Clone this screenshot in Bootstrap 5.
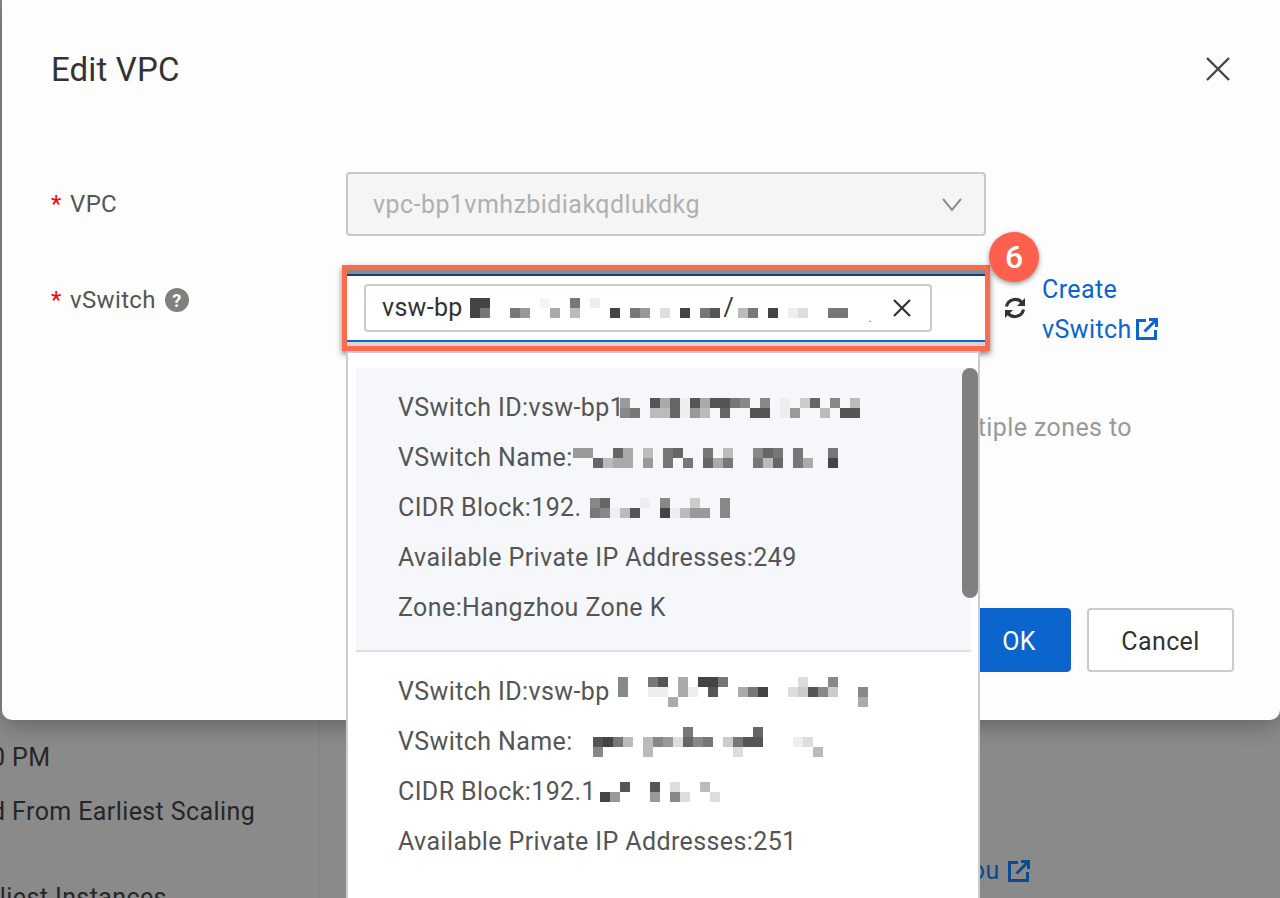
<!DOCTYPE html>
<html lang="en">
<head>
<meta charset="utf-8">
<title>Edit VPC</title>
<link href="https://cdn.jsdelivr.net/npm/bootstrap@5.3.0/dist/css/bootstrap.min.css" rel="stylesheet">
<style>
html,body{height:898px;overflow:hidden}
body{background:#8a8a8a;font-family:Roboto,"Liberation Sans",sans-serif;font-size:25px;color:#333;letter-spacing:.4px}
.stage{position:relative;height:898px;overflow:hidden}
.dlg.modal-content{margin-left:2px;width:1278px;height:720px;background:#fdfdfd;border:0;border-radius:0 0 10px 10px;box-shadow:0 4px 24px rgba(0,0,0,.3);position:relative;z-index:2;display:block;padding:0}
.dlg-head{padding:49px 49px 0;height:172px;display:flex;justify-content:space-between;align-items:flex-start}
.dlg-title{font-size:33px;line-height:42px;margin:0;font-weight:400;color:#333;letter-spacing:.15px}
.dlg-x{margin:7px 0 0 0;display:block;line-height:0}
.frow{display:flex;padding-left:49px}
.flabel{width:295px;flex:none;color:#555;display:flex;align-items:center;height:64px;white-space:nowrap;font-size:24px;letter-spacing:.35px}
.req{color:#f00;margin-right:9px;width:10px}
.qmark{display:inline-flex;width:24px;height:24px;border-radius:50%;background:#808080;color:#fff;font-size:18px;font-weight:700;align-items:center;justify-content:center;margin-left:9px;letter-spacing:0}
.vpc-box{width:640px;height:64px;background:#f5f5f5;border:2px solid #c8c8c8;border-radius:4px;color:#b0b0b0;display:flex;align-items:center;justify-content:space-between;padding:1px 22px 0 25px;letter-spacing:.44px}
.row2{margin-top:29px;position:relative}
.row2 .flabel{height:70px;align-items:center}
.hl{width:648px;height:86px;border:5px solid #ff6a4d;margin-left:-4px;flex:none;background:linear-gradient(#8a8a8a 0 50%,#d6d6d6 50%);box-shadow:0 3px 6px rgba(0,0,0,.5);position:relative;z-index:4}
.hl-in{margin-top:4px;height:68px;background:#fff;border-top:2px solid #0e3f7f;border-bottom:2px solid #0b65cc;padding:8px 53px 0 17px}
.sel{height:48px;border:2px solid #ccc;border-radius:4px;background:#fff;display:flex;align-items:center;padding:0 19px 0 16px;white-space:nowrap;color:#333;letter-spacing:.3px}
.sel svg.m{margin:0 4px 0 4px;flex:none}
.sel svg.m.first{margin-left:7px}
.speck{color:#777;margin-left:6px;font-size:14px;align-self:flex-end;line-height:26px}
.refresh{margin:31px 0 0 13px;flex:none;line-height:0}
.newlink{margin:5px 0 0 15px;line-height:40px;color:#0b65cc;width:140px}
.newlink svg{vertical-align:-2px;margin-left:-2px}
.bubble{position:absolute;left:987px;top:-33px;width:50px;height:50px;border-radius:50%;background:#ff5f4d;color:#fff;font-size:32px;font-weight:500;display:flex;align-items:center;justify-content:center;box-shadow:0 2px 5px rgba(0,0,0,.4);z-index:5;letter-spacing:0}
.hint{margin:60px 0 0 344px;width:786px;text-align:right;color:#999;white-space:nowrap;line-height:34px}
.foot{display:flex;justify-content:flex-end;gap:16px;padding-right:46px;margin-top:163px}
.foot .btn{height:64px;font-size:25px;border-radius:4px;letter-spacing:.4px;padding-top:10px}
.btn-ok.btn{width:140px;background:#0b65cc;border-color:#0b65cc;color:#fff;padding-left:48px}
.btn-no.btn{width:147px;background:#fff;border:2px solid #ccc;color:#333}
.drop{position:absolute;left:346px;top:351px;width:634px;height:552px;background:#fff;border:2px solid #ccc;z-index:3;padding:15px 7px 0 8px;overflow:hidden}
.drop .list-group-item{background:transparent;border:0;border-radius:0;padding:15px 42px 0;height:284px;color:#555;letter-spacing:.4px}
.drop .list-group-item.on{background:#f6f7fa;border-bottom:2px solid #e0e0e0}
.oline{height:50px;line-height:50px;white-space:nowrap;display:flex;align-items:center}
.oline svg{flex:none}
.oline svg.pull{margin-left:-4px}
.drop .list-group-item+.list-group-item{padding-top:15px;border-top:0}
.sbar{position:absolute;right:0;top:15px;width:16px;height:230px;border-radius:8px;background:#808080}
.m rect{width:10px;height:10px}
.under{display:flex;height:178px;color:#262626;position:relative;z-index:1}
.under-l{width:320px;border-right:1px solid #838383;padding-top:21px;line-height:34px;flex:none;overflow:hidden;white-space:nowrap;text-indent:-9px}
.under-l p{margin:0 0 20px}
.under-l p.gap{margin-bottom:52px}
.under-r{flex:1;padding:132px 0 0 0;position:relative}
.under-link{position:relative;margin-left:563px;color:#0d4a8f;line-height:34px;white-space:nowrap;display:inline-flex;align-items:center;gap:8px}
</style>
</head>
<body>
<div class="stage">
  <div class="dlg modal-content">
    <div class="dlg-head">
      <h5 class="dlg-title">Edit VPC</h5>
      <span class="dlg-x"><svg width="26" height="26" viewBox="0 0 26 26"><path d="M2 2l22 22M24 2L2 24" stroke="#444" stroke-width="2.4" fill="none"/></svg></span>
    </div>
    <div class="frow">
      <div class="flabel"><span class="req">*</span>VPC</div>
      <div class="vpc-box"><span>vpc-bp1vmhzbidiakqdlukdkg</span><svg width="20" height="14" viewBox="0 0 20 14"><path d="M1 1l9 11 9-11" stroke="#8f8f8f" stroke-width="2" fill="none"/></svg></div>
    </div>
    <div class="frow row2">
      <div class="flabel"><span class="req">*</span>vSwitch<span class="qmark">?</span></div>
      <div class="hl"><div class="hl-in"><div class="sel"><span>vsw-bp</span><svg class="m first" width="250" height="20" viewBox="0 0 250 20"><rect x="0" fill="#444"/><rect x="10" fill="#444"/><rect x="70" fill="#f5f5f5"/><rect x="100" fill="#777"/><rect x="120" fill="#eee"/><rect x="0" y="10" fill="#444"/><rect x="10" y="10" fill="#777"/><rect x="40" y="10" fill="#777"/><rect x="50" y="10" fill="#999"/><rect x="80" y="10" fill="#aaa"/><rect x="100" y="10" fill="#bbb"/><rect x="140" y="10" fill="#444"/><rect x="160" y="10" fill="#777"/><rect x="170" y="10" fill="#999"/><rect x="190" y="10" fill="#ddd"/><rect x="210" y="10" fill="#444"/><rect x="230" y="10" fill="#777"/><rect x="240" y="10" fill="#555"/></svg><span>/</span><svg class="m" width="120" height="20" viewBox="0 0 120 20"><rect x="0" y="10" fill="#bbb"/><rect x="10" y="10" fill="#777"/><rect x="30" y="10" fill="#444"/><rect x="50" y="10" fill="#eee"/><rect x="60" y="10" fill="#ddd"/><rect x="90" y="10" fill="#777"/><rect x="100" y="10" fill="#777"/></svg><span class="speck">.</span><span class="ms-auto"></span><svg width="18" height="18" viewBox="0 0 18 18"><path d="M1 1l16 16M17 1L1 17" stroke="#333" stroke-width="2.2" fill="none"/></svg></div></div></div>
      <span class="refresh"><svg width="24" height="24" viewBox="0 0 24 24" fill="none" stroke="#333" stroke-width="3.2"><path d="M3.500 10.500A8.800 8.800 0 0 1 19 6.800"/><path d="M20.500 13.500A8.800 8.800 0 0 1 5 17.200"/><path d="M22 2v8h-8z" fill="#333" stroke="none"/><path d="M2 22v-8h8z" fill="#333" stroke="none"/></svg></span>
      <div class="newlink">Create<br>vSwitch <svg width="22" height="22" viewBox="0 0 22 22" fill="none" stroke="#0b65cc" stroke-width="3"><path d="M10 2.500H1.500v18h18V12"/><path d="M8.500 13.500L19 3"/><path d="M13 1.500h7.500v7.500"/></svg></div>
      <span class="bubble">6</span>
    </div>
    <div class="hint">Select vSwitches in multiple zones to</div>
    <div class="foot">
      <button type="button" class="btn btn-ok">OK</button>
      <button type="button" class="btn btn-no">Cancel</button>
    </div>
  </div>

  <div class="drop">
    <div class="list-group list-group-flush">
      <div class="list-group-item on">
        <div class="oline">VSwitch ID:vsw-bp1<svg class="m pull" width="250" height="20" viewBox="0 0 250 20"><rect x="0" fill="#9a9a9a"/><rect x="30" fill="#555"/><rect x="40" fill="#aaa"/><rect x="50" fill="#666"/><rect x="60" fill="#eee"/><rect x="70" fill="#555"/><rect x="80" fill="#aaa"/><rect x="90" fill="#555"/><rect x="100" fill="#555"/><rect x="110" fill="#777"/><rect x="120" fill="#888"/><rect x="140" fill="#888"/><rect x="160" fill="#eee"/><rect x="180" fill="#ccc"/><rect x="190" fill="#666"/><rect x="210" fill="#888"/><rect x="230" fill="#bbb"/><rect x="0" y="10" fill="#888"/><rect x="10" y="10" fill="#777"/><rect x="30" y="10" fill="#bbb"/><rect x="40" y="10" fill="#bbb"/><rect x="50" y="10" fill="#666"/><rect x="60" y="10" fill="#eee"/><rect x="70" y="10" fill="#999"/><rect x="80" y="10" fill="#bbb"/><rect x="100" y="10" fill="#666"/><rect x="130" y="10" fill="#555"/><rect x="140" y="10" fill="#555"/><rect x="160" y="10" fill="#eee"/><rect x="170" y="10" fill="#999"/><rect x="200" y="10" fill="#bbb"/><rect x="220" y="10" fill="#555"/><rect x="230" y="10" fill="#555"/></svg></div>
        <div class="oline">VSwitch Name:<svg class="m" width="270" height="20" viewBox="0 0 270 20"><rect x="0" fill="#999"/><rect x="10" fill="#999"/><rect x="40" fill="#666"/><rect x="50" fill="#aaa"/><rect x="70" fill="#bbb"/><rect x="90" fill="#777"/><rect x="100" fill="#666"/><rect x="130" fill="#777"/><rect x="150" fill="#bbb"/><rect x="180" fill="#888"/><rect x="190" fill="#666"/><rect x="200" fill="#777"/><rect x="220" fill="#777"/><rect x="255" fill="#777"/><rect x="20" y="10" fill="#666"/><rect x="30" y="10" fill="#bbb"/><rect x="40" y="10" fill="#aaa"/><rect x="50" y="10" fill="#aaa"/><rect x="70" y="10" fill="#999"/><rect x="90" y="10" fill="#777"/><rect x="110" y="10" fill="#777"/><rect x="130" y="10" fill="#666"/><rect x="140" y="10" fill="#aaa"/><rect x="150" y="10" fill="#777"/><rect x="180" y="10" fill="#777"/><rect x="190" y="10" fill="#bbb"/><rect x="200" y="10" fill="#666"/><rect x="220" y="10" fill="#777"/><rect x="230" y="10" fill="#aaa"/><rect x="255" y="10" fill="#444"/></svg></div>
        <div class="oline">CIDR Block:192.<svg class="m ms-2" width="140" height="20" viewBox="0 0 140 20"><rect x="0" fill="#888"/><rect x="10" fill="#666"/><rect x="50" fill="#eee"/><rect x="70" fill="#888"/><rect x="100" fill="#ccc"/><rect x="130" fill="#888"/><rect x="0" y="10" fill="#777"/><rect x="10" y="10" fill="#888"/><rect x="20" y="10" fill="#eee"/><rect x="30" y="10" fill="#bbb"/><rect x="40" y="10" fill="#555"/><rect x="70" y="10" fill="#444"/><rect x="80" y="10" fill="#eee"/><rect x="90" y="10" fill="#bbb"/><rect x="100" y="10" fill="#999"/><rect x="110" y="10" fill="#999"/><rect x="130" y="10" fill="#888"/></svg></div>
        <div class="oline">Available Private IP Addresses:249</div>
        <div class="oline">Zone:Hangzhou Zone K</div>
      </div>
      <div class="list-group-item">
        <div class="oline">VSwitch ID:vsw-bp<svg class="m ms-2" width="250" height="30" viewBox="0 0 250 30"><rect x="0" fill="#888"/><rect x="30" fill="#777"/><rect x="40" fill="#555"/><rect x="60" fill="#aaa"/><rect x="80" fill="#444"/><rect x="90" fill="#444"/><rect x="100" fill="#777"/><rect x="180" fill="#ddd"/><rect x="210" fill="#888"/><rect x="0" y="10" fill="#888"/><rect x="30" y="10" fill="#eee"/><rect x="40" y="10" fill="#eee"/><rect x="60" y="10" fill="#aaa"/><rect x="70" y="10" fill="#eee"/><rect x="90" y="10" fill="#555"/><rect x="120" y="10" fill="#aaa"/><rect x="130" y="10" fill="#777"/><rect x="140" y="10" fill="#444"/><rect x="170" y="10" fill="#ddd"/><rect x="180" y="10" fill="#ccc"/><rect x="190" y="10" fill="#555"/><rect x="200" y="10" fill="#888"/><rect x="210" y="10" fill="#ccc"/><rect x="240" y="10" fill="#888"/><rect x="50" y="20" fill="#aaa"/><rect x="240" y="20" fill="#aaa"/></svg></div>
        <div class="oline">VSwitch Name:<svg class="m" width="260" height="30" viewBox="0 0 260 30"><rect x="110" fill="#777"/><rect x="180" fill="#666"/><rect x="20" y="10" fill="#555"/><rect x="30" y="10" fill="#444"/><rect x="40" y="10" fill="#777"/><rect x="50" y="10" fill="#bbb"/><rect x="70" y="10" fill="#bbb"/><rect x="80" y="10" fill="#888"/><rect x="90" y="10" fill="#999"/><rect x="100" y="10" fill="#ddd"/><rect x="110" y="10" fill="#666"/><rect x="120" y="10" fill="#888"/><rect x="130" y="10" fill="#777"/><rect x="150" y="10" fill="#ccc"/><rect x="160" y="10" fill="#777"/><rect x="170" y="10" fill="#555"/><rect x="180" y="10" fill="#555"/><rect x="220" y="10" fill="#eee"/><rect x="230" y="10" fill="#ddd"/><rect x="20" y="20" fill="#888"/><rect x="70" y="20" fill="#bbb"/><rect x="160" y="20" fill="#ddd"/><rect x="240" y="20" fill="#bbb"/></svg></div>
        <div class="oline">CIDR Block:192.1<svg class="m ms-1" width="130" height="20" viewBox="0 0 130 20"><rect x="20" fill="#555"/><rect x="50" fill="#555"/><rect x="70" fill="#ddd"/><rect x="100" fill="#bbb"/><rect x="0" y="10" fill="#444"/><rect x="10" y="10" fill="#999"/><rect x="50" y="10" fill="#999"/><rect x="70" y="10" fill="#888"/><rect x="80" y="10" fill="#ddd"/><rect x="110" y="10" fill="#ddd"/></svg></div>
        <div class="oline">Available Private IP Addresses:251</div>
      </div>
    </div>
    <div class="sbar"></div>
  </div>

  <div class="under">
    <div class="under-l">
      <p>0 PM</p>
      <p class="gap">d From Earliest Scaling</p>
      <p>rliest Instances</p>
    </div>
    <div class="under-r"><span class="under-link">Hangzhou <svg width="22" height="22" viewBox="0 0 22 22" fill="none" stroke="#0d4a8f" stroke-width="3"><path d="M10 2.500H1.500v18h18V12"/><path d="M8.500 13.500L19 3"/><path d="M13 1.500h7.500v7.500"/></svg></span></div>
  </div>
</div>
<script src="https://cdn.jsdelivr.net/npm/bootstrap@5.3.0/dist/js/bootstrap.bundle.min.js"></script>
</body>
</html>
